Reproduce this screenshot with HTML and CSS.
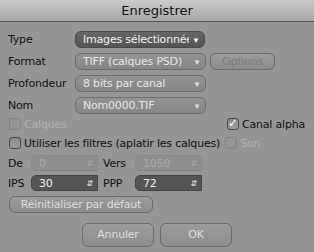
FILE: index.html
```html
<!DOCTYPE html>
<html>
<head>
  <title>Enregistrer</title>
  <link rel="stylesheet" href="styles.css">
</head>
<body>
  <div class="dialog">
    <div class="titlebar">Enregistrer</div>

    <div class="content">
      <div class="row">
        <span class="label">Type</span>
        <div class="popup dark w-type"><span class="txt">Images sélectionnées</span><span class="arrow">&#9662;</span></div>
      </div>
      <div class="row">
        <span class="label">Format</span>
        <div class="popup w-main"><span class="txt">TIFF (calques PSD)</span><span class="arrow">&#9662;</span></div>
        <div class="button options">Options</div>
      </div>
      <div class="row">
        <span class="label">Profondeur</span>
        <div class="popup w-main"><span class="txt">8 bits par canal</span><span class="arrow">&#9662;</span></div>
      </div>
      <div class="row">
        <span class="label">Nom</span>
        <div class="popup w-main"><span class="txt">Nom0000.TIF</span><span class="arrow">&#9662;</span></div>
      </div>

      <div class="checks first">
        <label class="check disabled"><span class="box"></span>Calques</label>
        <label class="check right"><span class="box checked">&#10003;</span>Canal alpha</label>
      </div>
      <div class="checks">
        <label class="check"><span class="box"></span>Utiliser les filtres (aplatir les calques)</label>
        <label class="check disabled son"><span class="box"></span>Son</label>
      </div>

      <div class="row fields">
        <span class="flabel">De</span>
        <div class="field disabled"><span>0</span><span class="step">&#8693;</span></div>
        <span class="flabel vers">Vers</span>
        <div class="field disabled"><span>1050</span><span class="step">&#8693;</span></div>
      </div>
      <div class="row fields">
        <span class="flabel">IPS</span>
        <div class="field dark"><span>30</span><span class="step">&#8693;</span></div>
        <span class="flabel vers">PPP</span>
        <div class="field dark"><span>72</span><span class="step">&#8693;</span></div>
      </div>

      <div class="button reset">Réinitialiser par défaut</div>

      <div class="actions">
        <div class="button big">Annuler</div>
        <div class="button big">OK</div>
      </div>
    </div>
  </div>
</body>
</html>
```

FILE: styles.css
```css
body {
  margin: 0;
  font-family: "DejaVu Sans", Verdana, sans-serif;
  font-size: 11px;
  letter-spacing: -0.2px;
  background-color: #959595;
}

.dialog {
  width: 314px;
  height: 252px;
  overflow: hidden;
}

.titlebar {
  height: 21px;
  line-height: 21px;
  text-align: center;
  font-size: 13px;
  letter-spacing: 0;
  color: #111;
  background: linear-gradient(#c9c9c9, #a9a9a9);
  border-bottom: 1px solid #555;
}

.content {
  padding: 9px 0 0 8px;
}

.row {
  display: flex;
  align-items: center;
  height: 17px;
  margin-bottom: 5px;
}

.label {
  width: 67px;
  color: #111;
}

.popup {
  box-sizing: border-box;
  height: 17px;
  border: 1px solid #6e6e6e;
  border-radius: 6px;
  background: linear-gradient(#939393, #868686);
  color: #e6e6e6;
  display: flex;
  align-items: center;
  padding: 0 6px 0 7px;
  overflow: hidden;
}

.popup .txt {
  flex: 1;
  min-width: 0;
  white-space: nowrap;
  overflow: hidden;
  text-overflow: clip;
}

.popup .arrow {
  font-size: 9px;
  color: #e0e0e0;
  margin-left: 5px;
}

.popup.dark {
  background: linear-gradient(#666, #555);
  border-color: #4a4a4a;
  color: #f2f2f2;
}

.popup.dark .arrow {
  color: #fff;
}

.w-type {
  width: 130px;
}

.w-main {
  width: 131px;
}

.button {
  box-sizing: border-box;
  border: 1px solid #6c6c6c;
  border-radius: 6px;
  background: linear-gradient(#9c9c9c, #8c8c8c);
  color: #dedede;
  text-align: center;
}

.options {
  width: 65px;
  height: 17px;
  line-height: 15px;
  margin-left: 4px;
  color: #7c7c7c;
}

.checks {
  display: flex;
  align-items: center;
  height: 14px;
  margin-bottom: 5px;
}

.checks.first {
  margin-top: -2px;
}

.check {
  display: flex;
  align-items: center;
  color: #111;
  white-space: nowrap;
}

.check.right {
  margin-left: auto;
  margin-right: 9px;
}

.check.son {
  margin-left: 4px;
}

.box {
  box-sizing: border-box;
  width: 12px;
  height: 12px;
  border: 1px solid #4a4a4a;
  border-radius: 3px;
  background: linear-gradient(#8a8a8a, #9a9a9a);
  margin: 0 3px 0 1px;
  font-size: 12px;
  line-height: 9px;
  color: #fff;
  text-align: center;
}

.check.disabled {
  color: #b0b0b0;
}

.check.disabled .box {
  border-color: #828282;
  background: #959595;
}

.fields {
  height: 16px;
  margin-bottom: 4px;
}

.checks + .fields {
  margin-top: 2px;
}

.flabel {
  width: 23px;
  color: #111;
}

.flabel.vers {
  width: 32px;
  margin-left: 5px;
}

.field {
  box-sizing: border-box;
  width: 67px;
  height: 16px;
  border: 1px solid #777;
  border-radius: 5px 0 0 5px;
  display: flex;
  align-items: center;
  padding: 0 4px 0 7px;
}

.field span:first-child {
  flex: 1;
}

.field .step {
  font-size: 8px;
}

.field.disabled {
  background: #8e8e8e;
  color: #a8a8a8;
  border-color: #888;
}

.field.dark {
  background: #555;
  border-color: #444;
  color: #f0f0f0;
}

.reset {
  width: 144px;
  height: 17px;
  line-height: 15px;
  margin: 5px 0 0 1px;
}

.actions {
  display: flex;
  justify-content: center;
  gap: 6px;
  margin-top: 10px;
  padding-right: 8px;
}

.big {
  width: 72px;
  height: 24px;
  line-height: 22px;
}
```
